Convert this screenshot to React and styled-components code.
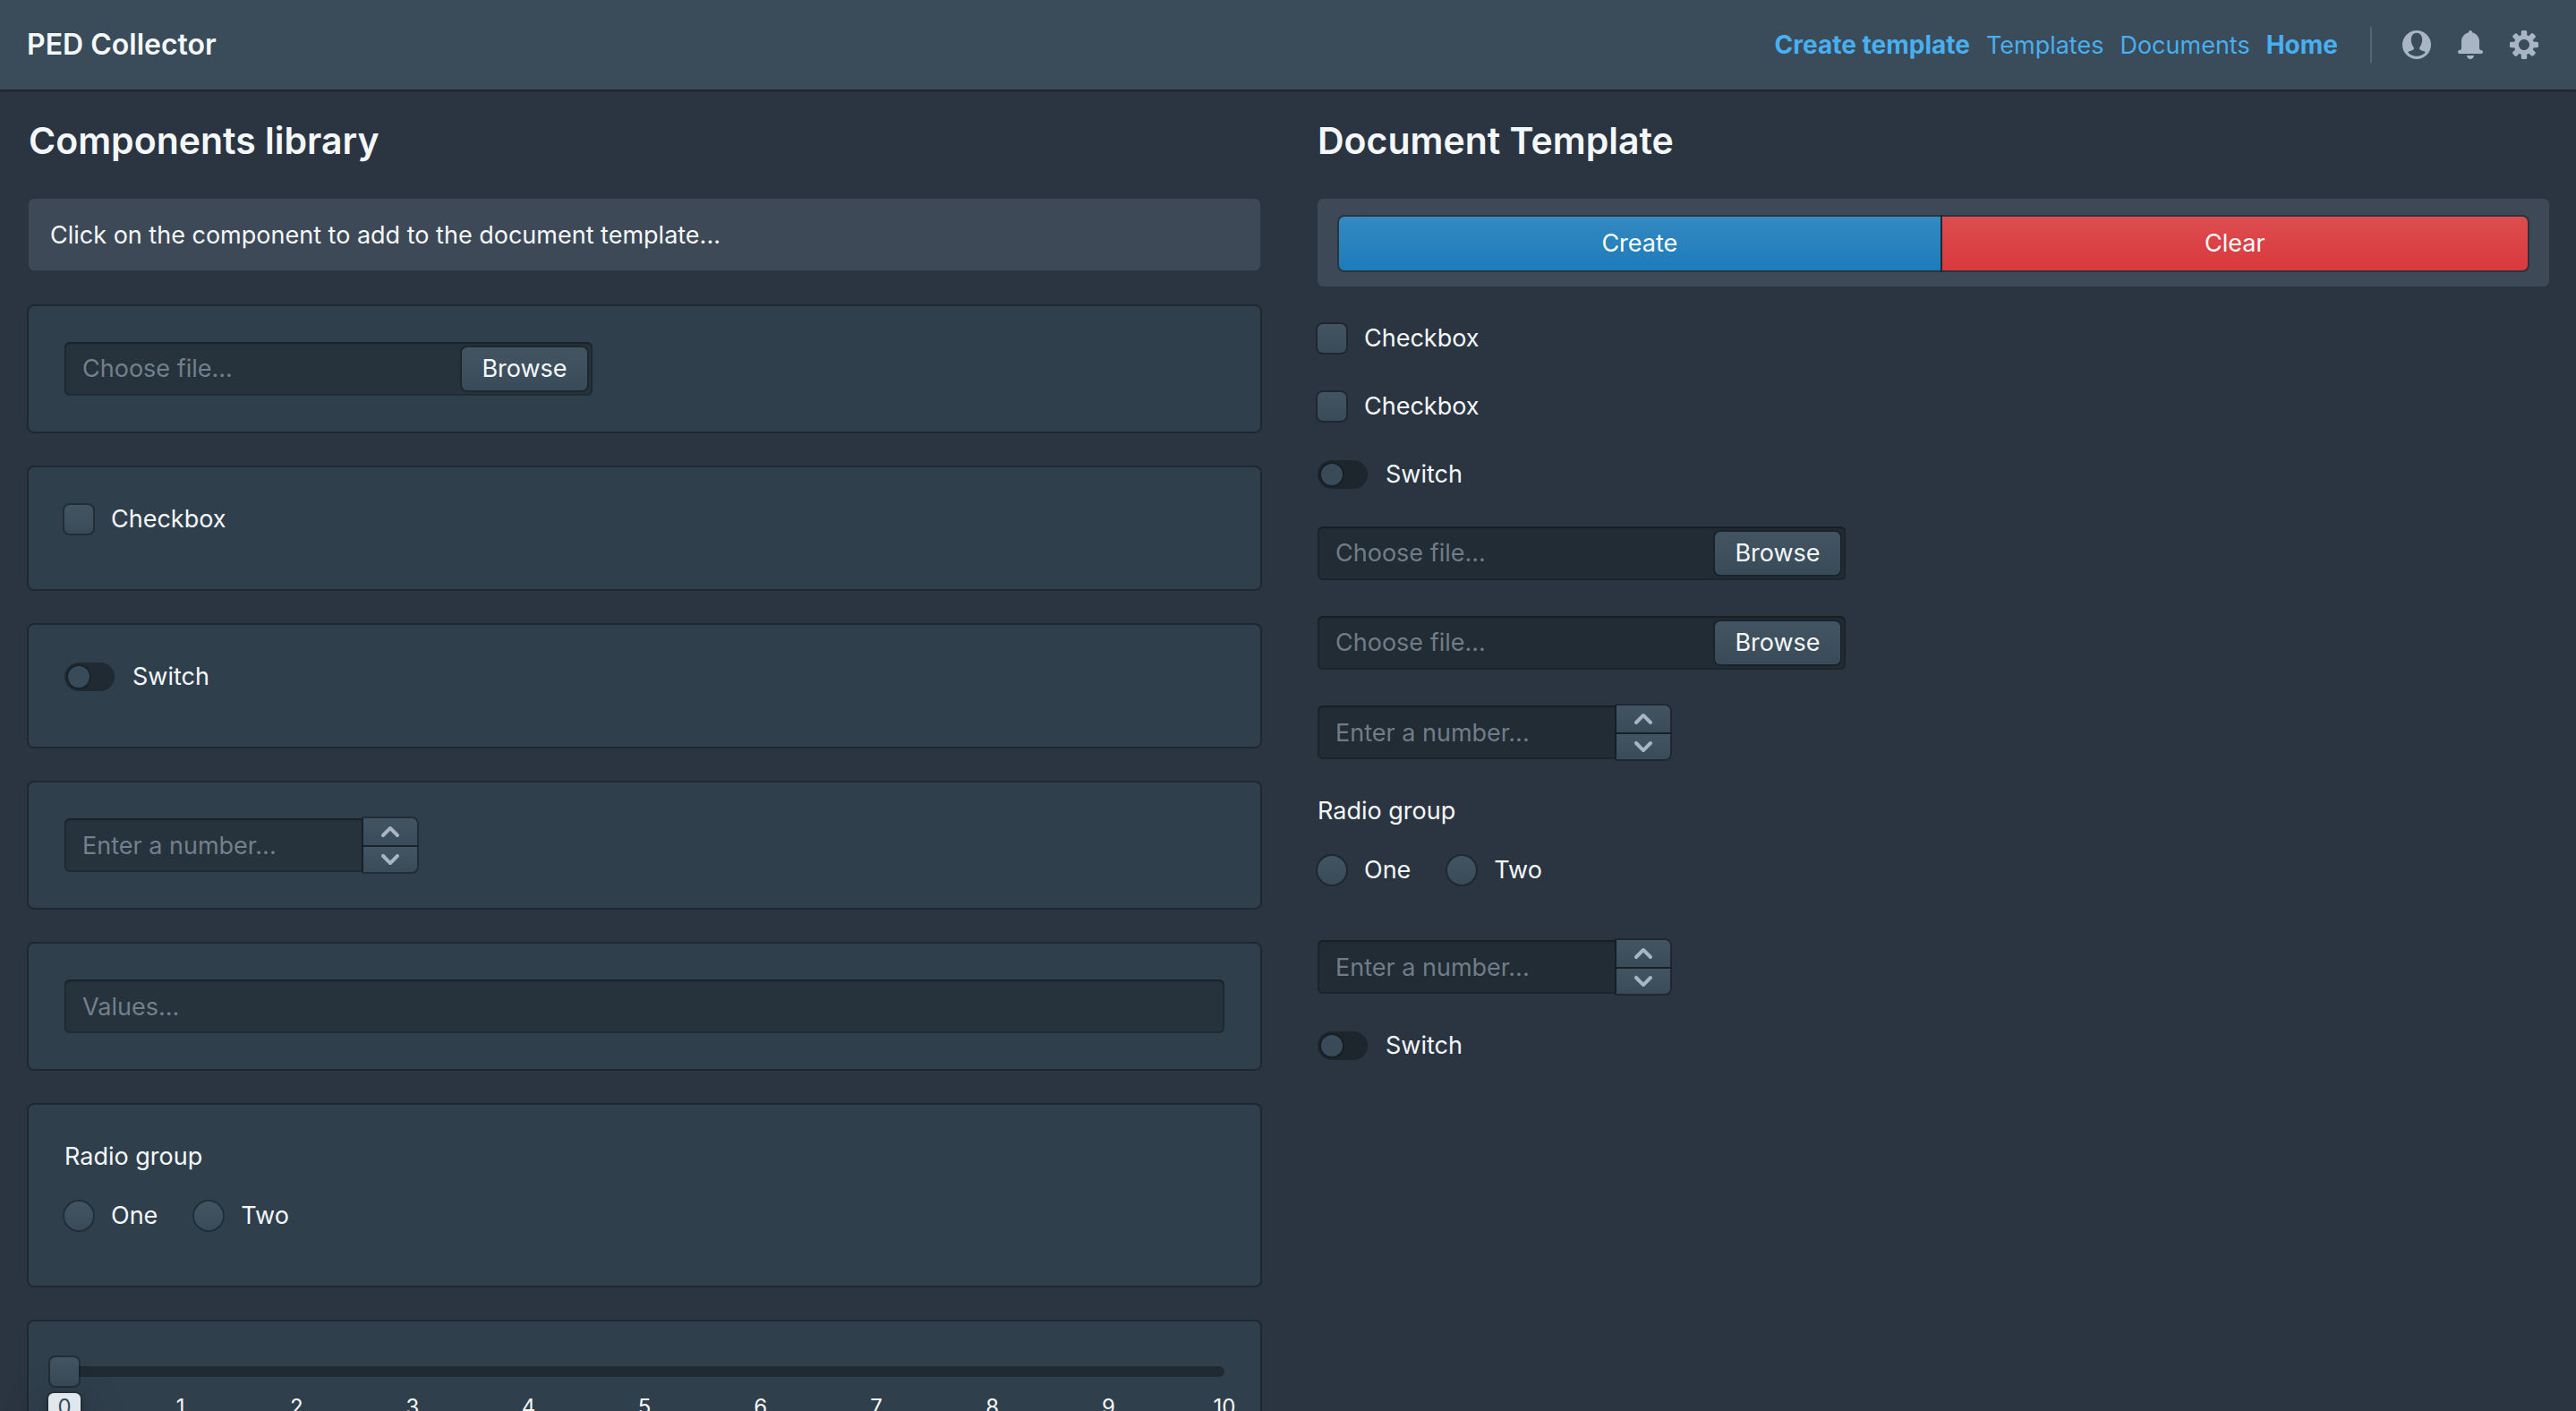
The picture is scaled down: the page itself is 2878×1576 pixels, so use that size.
import React, { useId, useState } from "react";
import styled, { createGlobalStyle, css } from "styled-components";

const GlobalStyle = createGlobalStyle`
  *, *::before, *::after { box-sizing: border-box; }
  html, body { margin: 0; height: 100%; }
  body {
    background: #2a3541;
    color: #f5f8fa;
    font-family: Inter, Roboto, "Liberation Sans", sans-serif;
    font-size: 27px;
    line-height: 36px;
    overflow: hidden;
  }
  button, input { font: inherit; color: inherit; }
  h1, h2, p, ul, ol { margin: 0; padding: 0; }
`;

/* ---------- navigation ---------- */

const Navbar = styled.header`
  position: relative;
  display: flex;
  align-items: center;
  justify-content: space-between;
  height: 100px;
  padding: 0 28px 0 30px;
  background: #3a4b59;
  box-shadow: 0 0 0 2px rgba(16, 22, 26, 0.2), 0 2px 2px rgba(16, 22, 26, 0.4);
`;

const Brand = styled.h1`
  font-size: 32px;
  font-weight: 600;
  line-height: 42px;
`;

const NavGroup = styled.nav`
  display: flex;
  align-items: center;
`;

const NavLinks = styled.div`
  display: flex;
  align-items: baseline;
  gap: 18px;
`;

const NavLink = styled.a`
  color: #48aff0;
  font-size: ${(p) => (p.$strong ? "28px" : "27px")};
  font-weight: ${(p) => (p.$strong ? 700 : 400)};
  text-decoration: none;
`;

const NavDivider = styled.span`
  width: 2px;
  height: 40px;
  margin: 0 20px 0 36px;
  background: rgba(255, 255, 255, 0.15);
`;

const IconButton = styled.button`
  display: flex;
  align-items: center;
  justify-content: center;
  width: 60px;
  height: 60px;
  padding: 0;
  border: 0;
  border-radius: 6px;
  background: none;
  color: #a7b6c2;
`;

const Glyph = styled.svg`
  display: block;
  width: 32px;
  height: 32px;
  fill: currentColor;
`;

/* ---------- page ---------- */

const Page = styled.main`
  display: grid;
  grid-template-columns: 1fr 1fr;
  column-gap: 64px;
  align-items: start;
  padding: 32px 30px 40px 32px;
`;

const Column = styled.section`
  display: flex;
  flex-direction: column;
  gap: 40px;
  min-width: 0;
`;

const Title = styled.h2`
  font-size: 41px;
  font-weight: 600;
  line-height: 50px;
`;

const Callout = styled.div`
  padding: 20px 24px 18px;
  border-radius: 6px;
  background: rgba(138, 155, 168, 0.2);
  line-height: 42px;
`;

const Card = styled.div`
  padding: 40px 40px ${(p) => (p.$roomy ? "60px" : "40px")};
  border-radius: 6px;
  background: #303f4c;
  box-shadow: 0 0 0 2px rgba(16, 22, 26, 0.4);
`;

const raised = css`
  background: #394b59 linear-gradient(to bottom, rgba(255, 255, 255, 0.05), rgba(255, 255, 255, 0));
  box-shadow: 0 0 0 2px rgba(16, 22, 26, 0.4);
`;

const sunken = css`
  background: rgba(16, 22, 26, 0.3);
  box-shadow: inset 0 0 0 2px rgba(16, 22, 26, 0.3), inset 0 2px 2px rgba(16, 22, 26, 0.4);
`;

const ButtonGroup = styled.div`
  display: flex;
  gap: 2px;
`;

const ActionButton = styled.button`
  flex: 1 1 auto;
  height: 60px;
  padding: 0 20px;
  border: 0;
  border-radius: ${(p) => (p.$danger ? "0 6px 6px 0" : "6px 0 0 6px")};
  background: ${(p) => (p.$danger ? "#d9393c" : "#1d7cba")}
    linear-gradient(to bottom, rgba(255, 255, 255, 0.1), rgba(255, 255, 255, 0));
  box-shadow: 0 0 0 2px rgba(16, 22, 26, 0.4);
  color: #fff;
`;

/* ---------- form controls ---------- */

const Control = styled.label`
  display: flex;
  align-items: center;
  gap: 20px;
`;

const Tick = styled.input`
  appearance: none;
  flex: none;
  width: 32px;
  height: 32px;
  margin: 0;
  border-radius: ${(p) => (p.type === "radio" ? "50%" : "6px")};
  ${raised}
  &:checked { background-color: #137cbd; }
`;

const Toggle = styled.input`
  appearance: none;
  flex: none;
  width: 56px;
  height: 32px;
  margin: 0;
  padding: 4px;
  border-radius: 32px;
  background: rgba(16, 22, 26, 0.5);
  &::before {
    content: "";
    display: block;
    width: 24px;
    height: 24px;
    border-radius: 50%;
    background: #394b59;
    box-shadow: 0 0 0 2px rgba(16, 22, 26, 0.4);
  }
  &:checked { background: #137cbd; }
  &:checked::before { margin-left: 24px; }
`;

const TextField = styled.input`
  display: block;
  width: ${(p) => (p.$numeric ? "334px" : "100%")};
  height: 60px;
  padding: 0 20px;
  border: 0;
  border-radius: ${(p) => (p.$numeric ? "6px 0 0 6px" : "6px")};
  outline: 0;
  ${sunken}
  &::placeholder { color: rgba(167, 182, 194, 0.6); opacity: 1; }
`;

const FileLabel = styled.label`
  position: relative;
  display: flex;
  align-items: center;
  justify-content: space-between;
  width: 590px;
  height: 60px;
  padding: 6px 6px 6px 20px;
  border-radius: 6px;
  color: rgba(167, 182, 194, 0.6);
  ${sunken}
`;

const HiddenFile = styled.input`
  position: absolute;
  inset: 0;
  width: 100%;
  opacity: 0;
`;

const BrowseFace = styled.span`
  width: 140px;
  border-radius: 6px;
  color: #f5f8fa;
  line-height: 48px;
  text-align: center;
  ${raised}
`;

const NumberGroup = styled.div`
  display: flex;
`;

const Stepper = styled.div`
  display: grid;
  grid-template-rows: 30px 28px;
  row-gap: 2px;
  width: 60px;
`;

const StepButton = styled.button`
  display: flex;
  align-items: center;
  justify-content: center;
  padding: 0;
  border: 0;
  border-radius: ${(p) => (p.$down ? "0 0 6px 0" : "0 6px 0 0")};
  color: #a7b6c2;
  ${raised}
`;

const RadioSet = styled.div`
  display: flex;
  flex-direction: column;
  gap: 30px;
  padding-bottom: 20px;
`;

const RadioRow = styled.div`
  display: flex;
  gap: 41px;
`;

const SliderBox = styled.div`
  display: grid;
`;

const SliderTrack = styled.span`
  grid-area: 1 / 1;
  align-self: center;
  height: 12px;
  border-radius: 6px;
  background: rgba(16, 22, 26, 0.5);
`;

const SliderInput = styled.input`
  grid-area: 1 / 1;
  appearance: none;
  height: 32px;
  margin: 0 -16px;
  background: none;
  &::-webkit-slider-thumb {
    appearance: none;
    width: 32px;
    height: 32px;
    border-radius: 6px;
    ${raised}
  }
`;

const SliderScale = styled.ol`
  display: flex;
  justify-content: space-between;
  padding-top: 8px;
  list-style: none;
  font-size: 24px;
  line-height: 24px;
`;

const ScaleMark = styled.li`
  display: flex;
  justify-content: center;
  width: 0;
`;

const ScaleLabel = styled.span`
  padding: 4px 10px;
  border-radius: 6px;
  ${(p) =>
    p.$current &&
    css`
      background: #e1e8ed;
      color: #394b59;
      box-shadow: 0 0 0 2px rgba(16, 22, 26, 0.2), 0 4px 8px rgba(16, 22, 26, 0.4),
        0 16px 48px rgba(16, 22, 26, 0.4);
    `}
`;

/* ---------- icons ---------- */

const paths = {
  user: "M8 0a8 8 0 1 0 0 16A8 8 0 0 0 8 0zM8 14.4c-2 0-3.8-.9-4.95-2.3.6-.35 2.3-.9 2.9-1.2.6-.3.65-1.1.3-1.7C5.5 8.3 4.9 6.8 4.9 5.2 4.9 2.9 6.1 1.4 8 1.4s3.1 1.5 3.1 3.8c0 1.6-.6 3.1-1.35 4-.35.6-.3 1.4.3 1.7.6.3 2.3.85 2.9 1.2C11.8 13.5 10 14.4 8 14.4z",
  bell: "M8 16c1.1 0 2-.9 2-2H6c0 1.1.9 2 2 2zm6-5c-.55 0-1-.45-1-1V6c0-2.43-1.73-4.45-4.02-4.9 0-.04.02-.06.02-.1 0-.55-.45-1-1-1S7 .45 7 1c0 .04.02.06.02.1A4.992 4.992 0 0 0 3 6v4c0 .55-.45 1-1 1s-1 .45-1 1 .45 1 1 1h12c.55 0 1-.45 1-1s-.45-1-1-1z",
  cog: "M15.19 6.39h-1.85c-.11-.37-.27-.71-.45-1.04l1.36-1.36c.31-.31.31-.82 0-1.13l-1.13-1.13a.803.803 0 0 0-1.13 0l-1.36 1.36c-.33-.17-.67-.33-1.04-.44V.79c0-.44-.36-.8-.8-.8h-1.6c-.44 0-.8.36-.8.8v1.86c-.39.12-.75.28-1.1.47l-1.3-1.3c-.3-.3-.79-.3-1.09 0L1.82 2.91c-.3.3-.3.79 0 1.09l1.3 1.3c-.2.34-.36.7-.48 1.09H.79c-.44 0-.8.36-.8.8v1.6c0 .44.36.8.8.8h1.85c.11.37.27.71.45 1.04l-1.36 1.36c-.31.31-.31.82 0 1.13l1.13 1.13c.31.31.82.31 1.13 0l1.36-1.36c.33.18.67.33 1.04.44v1.86c0 .44.36.8.8.8h1.6c.44 0 .8-.36.8-.8v-1.86c.39-.12.75-.28 1.1-.47l1.3 1.3c.3.3.79.3 1.09 0l1.09-1.09c.3-.3.3-.79 0-1.09l-1.3-1.3c.19-.35.36-.71.48-1.1h1.85c.44 0 .8-.36.8-.8v-1.6a.816.816 0 0 0-.81-.79zm-7.2 4.6c-1.66 0-3-1.34-3-3s1.34-3 3-3 3 1.34 3 3-1.34 3-3 3z",
  up: "M12.71 9.29l-4-4C8.53 5.11 8.28 5 8 5s-.53.11-.71.29l-4 4a1.003 1.003 0 0 0 1.42 1.42L8 7.41l3.29 3.29c.18.19.43.3.71.3a1.003 1.003 0 0 0 .71-1.71z",
  down: "M12 5c-.28 0-.53.11-.71.29L8 8.59l-3.29-3.3a1.003 1.003 0 0 0-1.42 1.42l4 4c.18.18.43.29.71.29s.53-.11.71-.29l4-4A1.003 1.003 0 0 0 12 5z",
};

const Icon = ({ name }) => (
  <Glyph viewBox="0 0 16 16" aria-hidden="true">
    <path fillRule="evenodd" d={paths[name]} />
  </Glyph>
);

/* ---------- template components ---------- */

const Checkbox = () => (
  <Control>
    <Tick type="checkbox" />
    Checkbox
  </Control>
);

const Switch = () => (
  <Control>
    <Toggle type="checkbox" role="switch" />
    Switch
  </Control>
);

const FileInput = () => (
  <FileLabel>
    <HiddenFile type="file" />
    Choose file...
    <BrowseFace>Browse</BrowseFace>
  </FileLabel>
);

function NumberInput() {
  const [value, setValue] = useState("");
  const step = (by) => setValue(String((Number(value) || 0) + by));
  return (
    <NumberGroup>
      <TextField
        $numeric
        inputMode="numeric"
        aria-label="Number"
        placeholder="Enter a number..."
        value={value}
        onChange={(e) => setValue(e.target.value)}
      />
      <Stepper>
        <StepButton type="button" aria-label="Increase" onClick={() => step(1)}>
          <Icon name="up" />
        </StepButton>
        <StepButton $down type="button" aria-label="Decrease" onClick={() => step(-1)}>
          <Icon name="down" />
        </StepButton>
      </Stepper>
    </NumberGroup>
  );
}

function RadioGroup() {
  const id = useId();
  return (
    <RadioSet role="radiogroup" aria-labelledby={id}>
      <p id={id}>Radio group</p>
      <RadioRow>
        {["One", "Two"].map((option) => (
          <Control key={option}>
            <Tick type="radio" name={id} value={option} />
            {option}
          </Control>
        ))}
      </RadioRow>
    </RadioSet>
  );
}

function Slider() {
  const [value, setValue] = useState(0);
  return (
    <div>
      <SliderBox>
        <SliderTrack />
        <SliderInput
          type="range"
          min="0"
          max="10"
          aria-label="Slider"
          value={value}
          onChange={(e) => setValue(Number(e.target.value))}
        />
      </SliderBox>
      <SliderScale>
        {Array.from({ length: 11 }, (_, n) => (
          <ScaleMark key={n}>
            <ScaleLabel $current={n === value}>{n}</ScaleLabel>
          </ScaleMark>
        ))}
      </SliderScale>
    </div>
  );
}

const links = [
  { text: "Create template", strong: true },
  { text: "Templates" },
  { text: "Documents" },
  { text: "Home", strong: true },
];

const library = [
  { Part: FileInput },
  { Part: Checkbox, roomy: true },
  { Part: Switch, roomy: true },
  { Part: NumberInput },
  { Part: () => <TextField aria-label="Values" placeholder="Values..." /> },
  { Part: RadioGroup },
  { Part: Slider },
];

const template = [
  Checkbox, Checkbox, Switch, FileInput, FileInput,
  NumberInput, RadioGroup, NumberInput, Switch,
];

export default function App() {
  return (
    <>
      <GlobalStyle />
      <Navbar>
        <Brand>PED Collector</Brand>
        <NavGroup>
          <NavLinks>
            {links.map(({ text, strong }) => (
              <NavLink key={text} href="#" $strong={strong}>{text}</NavLink>
            ))}
          </NavLinks>
          <NavDivider />
          <IconButton type="button" aria-label="Account"><Icon name="user" /></IconButton>
          <IconButton type="button" aria-label="Notifications"><Icon name="bell" /></IconButton>
          <IconButton type="button" aria-label="Settings"><Icon name="cog" /></IconButton>
        </NavGroup>
      </Navbar>
      <Page>
        <Column>
          <Title>Components library</Title>
          <Callout>Click on the component to add to the document template...</Callout>
          {library.map(({ Part, roomy }, i) => (
            <Card key={i} $roomy={roomy}><Part /></Card>
          ))}
        </Column>
        <Column>
          <Title>Document Template</Title>
          <Callout>
            <ButtonGroup>
              <ActionButton type="button">Create</ActionButton>
              <ActionButton type="button" $danger>Clear</ActionButton>
            </ButtonGroup>
          </Callout>
          {template.map((Part, i) => <Part key={i} />)}
        </Column>
      </Page>
    </>
  );
}
